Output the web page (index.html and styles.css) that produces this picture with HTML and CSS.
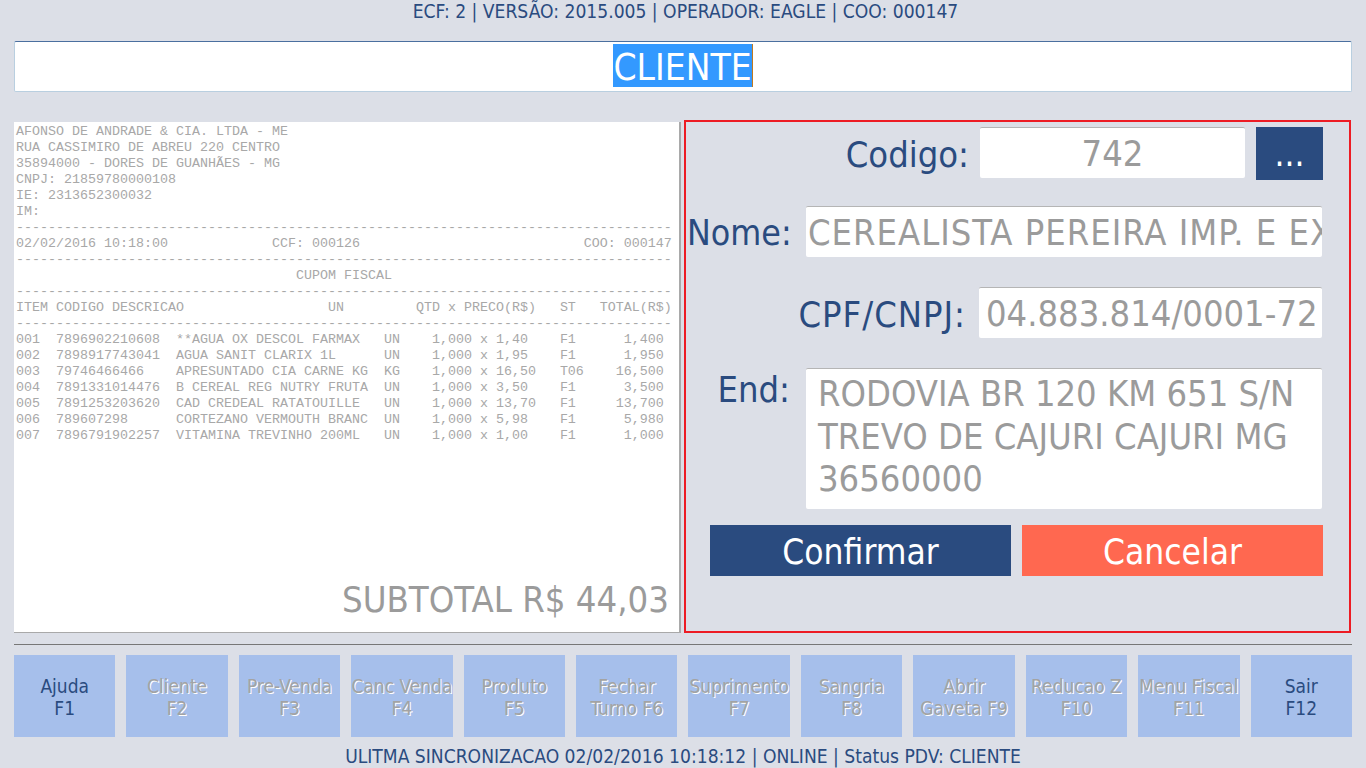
FILE: index.html
```html
<!DOCTYPE html>
<html lang="en">
<head>
    <meta charset="UTF-8">
    <meta name="viewport" content="width=device-width, initial-scale=1.0">
    <title>PDV</title>
    <link rel="stylesheet" href="styles.css">
</head>
<body>
    <div class="info-line top-line">ECF: 2 | VERSÃO: 2015.005 | OPERADOR: EAGLE | COO: 000147</div>

    <div class="status-box"><span class="status-text">CLIENTE</span></div>

    <div class="main">
        <div class="receipt">
<pre class="receipt-text">AFONSO DE ANDRADE &amp; CIA. LTDA - ME
RUA CASSIMIRO DE ABREU 220 CENTRO
35894000 - DORES DE GUANHÃES - MG
CNPJ: 21859780000108
IE: 2313652300032
IM:
----------------------------------------------------------------------------------
02/02/2016 10:18:00             CCF: 000126                            COO: 000147
----------------------------------------------------------------------------------
                                   CUPOM FISCAL
----------------------------------------------------------------------------------
ITEM CODIGO DESCRICAO                  UN         QTD x PRECO(R$)   ST   TOTAL(R$)
----------------------------------------------------------------------------------
001  7896902210608  **AGUA OX DESCOL FARMAX   UN    1,000 x 1,40    F1      1,400
002  7898917743041  AGUA SANIT CLARIX 1L      UN    1,000 x 1,95    F1      1,950
003  79746466466    APRESUNTADO CIA CARNE KG  KG    1,000 x 16,50   T06    16,500
004  7891331014476  B CEREAL REG NUTRY FRUTA  UN    1,000 x 3,50    F1      3,500
005  7891253203620  CAD CREDEAL RATATOUILLE   UN    1,000 x 13,70   F1     13,700
006  789607298      CORTEZANO VERMOUTH BRANC  UN    1,000 x 5,98    F1      5,980
007  7896791902257  VITAMINA TREVINHO 200ML   UN    1,000 x 1,00    F1      1,000</pre>
            <div class="subtotal">SUBTOTAL R$ 44,03</div>
        </div>

        <div class="client-form">
            <div class="row row-codigo">
                <label class="field-label">Codigo:</label>
                <input class="field field-center field-codigo" type="text" value="742" readonly>
                <button class="btn btn-search">...</button>
            </div>
            <div class="row row-nome">
                <label class="field-label">Nome:</label>
                <input class="field field-nome" type="text" value="CEREALISTA PEREIRA IMP. E EXPORTACAO LTDA" readonly>
            </div>
            <div class="row row-cpf">
                <label class="field-label">CPF/CNPJ:</label>
                <input class="field field-cpf" type="text" value="04.883.814/0001-72" readonly>
            </div>
            <div class="row row-end">
                <label class="field-label">End:</label>
                <textarea class="field field-end" readonly>RODOVIA BR 120 KM 651 S/N TREVO DE CAJURI CAJURI MG 36560000</textarea>
            </div>
            <div class="row row-actions">
                <button class="btn btn-confirm">Confirmar</button>
                <button class="btn btn-cancel">Cancelar</button>
            </div>
        </div>
    </div>

    <hr class="divider">

    <div class="fkeys">
        <button class="fkey">Ajuda<br>F1</button>
        <button class="fkey off">Cliente<br>F2</button>
        <button class="fkey off">Pre-Venda<br>F3</button>
        <button class="fkey off">Canc Venda<br>F4</button>
        <button class="fkey off">Produto<br>F5</button>
        <button class="fkey off">Fechar<br>Turno F6</button>
        <button class="fkey off">Suprimento<br>F7</button>
        <button class="fkey off">Sangria<br>F8</button>
        <button class="fkey off">Abrir<br>Gaveta F9</button>
        <button class="fkey off">Reducao Z<br>F10</button>
        <button class="fkey off">Menu Fiscal<br>F11</button>
        <button class="fkey">Sair<br>F12</button>
    </div>

    <div class="info-line bottom-line">ULITMA SINCRONIZACAO 02/02/2016 10:18:12 | ONLINE | Status PDV: CLIENTE</div>
</body>
</html>
```
FILE: styles.css
```css
html, body {
    height: 100%;
    margin: 0;
    padding: 0;
    overflow: hidden;
}

body {
    background-color: #dcdfe7;
    color: #2a4b7f;
    font-family: "DejaVu Sans Condensed", "DejaVu Sans", sans-serif;
    font-stretch: condensed;
    padding: 0 14px;
    box-sizing: border-box;
}

input, textarea, button {
    font-family: inherit;
    font-stretch: inherit;
    border: none;
    margin: 0;
    outline: none;
}

.info-line {
    text-align: center;
    font-size: 19.1px;
    line-height: 24px;
}

.top-line {
    height: 41px;
    padding-left: 5px;
    box-sizing: border-box;
}

.bottom-line {
    margin-top: 8px;
}

.status-box {
    height: 51px;
    box-sizing: border-box;
    background-color: white;
    border: 1px solid #b9cfe0;
    border-top-color: #4a6f9f;
    border-radius: 2px;
    text-align: center;
    padding-top: 2px;
}

.status-text {
    display: inline-block;
    height: 43px;
    line-height: 48px;
    font-size: 36.8px;
    color: white;
    background-color: #3399ff;
    border-right: 1px solid #c07a20;
}

.main {
    display: flex;
    margin-top: 28px;
    height: 513px;
}

.receipt {
    width: 667px;
    height: 511px;
    margin-top: 2px;
    box-sizing: border-box;
    background-color: white;
    border-right: 2px solid #a9a9a9;
    border-bottom: 1px solid #a9a9a9;
    position: relative;
    padding: 2px 0 0 2px;
}

.receipt-text {
    margin: 0;
    font-family: "Liberation Mono", monospace;
    font-size: 13.33px;
    line-height: 16px;
    color: #a8a8a8;
}

.subtotal {
    position: absolute;
    right: 10px;
    bottom: 10px;
    font-size: 36.2px;
    line-height: 44px;
    color: #9b9b9b;
}

.client-form {
    width: 667px;
    margin-left: 3px;
    box-sizing: border-box;
    border: 2px solid #ed1c24;
}

.row {
    display: flex;
    align-items: center;
}

.field-label {
    font-size: 36px;
    line-height: 44px;
    text-align: right;
}

.field {
    background-color: white;
    border-top: 1px solid #b5b5b5;
    box-sizing: border-box;
    color: #9b9b9b;
    font-size: 36px;
    border-radius: 2px;
    padding: 0 3px;
}

.field-center {
    text-align: center;
}

.row-codigo {
    margin-top: 5px;
    justify-content: flex-end;
    align-items: flex-start;
    padding-right: 26px;
}

.row-codigo .field-label {
    margin: 6px 11px 0 0;
}

.field-codigo {
    width: 265px;
    height: 51px;
    margin-right: 11px;
}

.btn {
    color: white;
    font-size: 35px;
    border-radius: 0;
}

.btn-search {
    width: 67px;
    height: 53px;
    background-color: #2a4b7f;
}

.row-nome {
    margin-top: 26px;
    padding-left: 1px;
}

.row-nome .field-label {
    width: 104px;
    margin: 2px 15px 0 0;
    font-size: 35.4px;
    white-space: nowrap;
}

.field-nome {
    width: 516px;
    height: 51px;
    padding: 0 0 0 2px;
    letter-spacing: 1px;
}

.row-cpf {
    margin-top: 30px;
    justify-content: flex-end;
    padding-right: 27px;
}

.row-cpf .field-label {
    margin: 5px 13px 0 0;
    letter-spacing: 1px;
}

.field-cpf {
    width: 343px;
    height: 51px;
    padding: 0 7px;
}

.row-end {
    margin-top: 30px;
    align-items: flex-start;
    padding-left: 1px;
}

.row-end .field-label {
    width: 103px;
    margin-right: 16px;
}

.field-end {
    width: 516px;
    height: 141px;
    padding: 4px 12px;
    line-height: 42.6px;
    resize: none;
    overflow: hidden;
}

.row-actions {
    margin-top: 16px;
    gap: 11px;
    padding-left: 24px;
}

.btn-confirm, .btn-cancel {
    width: 301px;
    height: 51px;
    padding-top: 4px;
}

.btn-confirm {
    background-color: #2a4b7f;
}

.btn-cancel {
    background-color: #ff6850;
}

.divider {
    margin: 11px 0 10px;
    border: none;
    border-top: 1px solid #777;
}

.fkeys {
    display: grid;
    grid-template-columns: repeat(12, 1fr);
    gap: 11px;
}

.fkey {
    height: 82px;
    padding: 2px 0 0;
    background-color: #a6bfeb;
    color: #2a4b7f;
    font-size: 19px;
    line-height: 22px;
    white-space: nowrap;
}

.fkey.off {
    color: #a3a3a3;
    text-shadow: 1px 1px 0 white;
}
```
